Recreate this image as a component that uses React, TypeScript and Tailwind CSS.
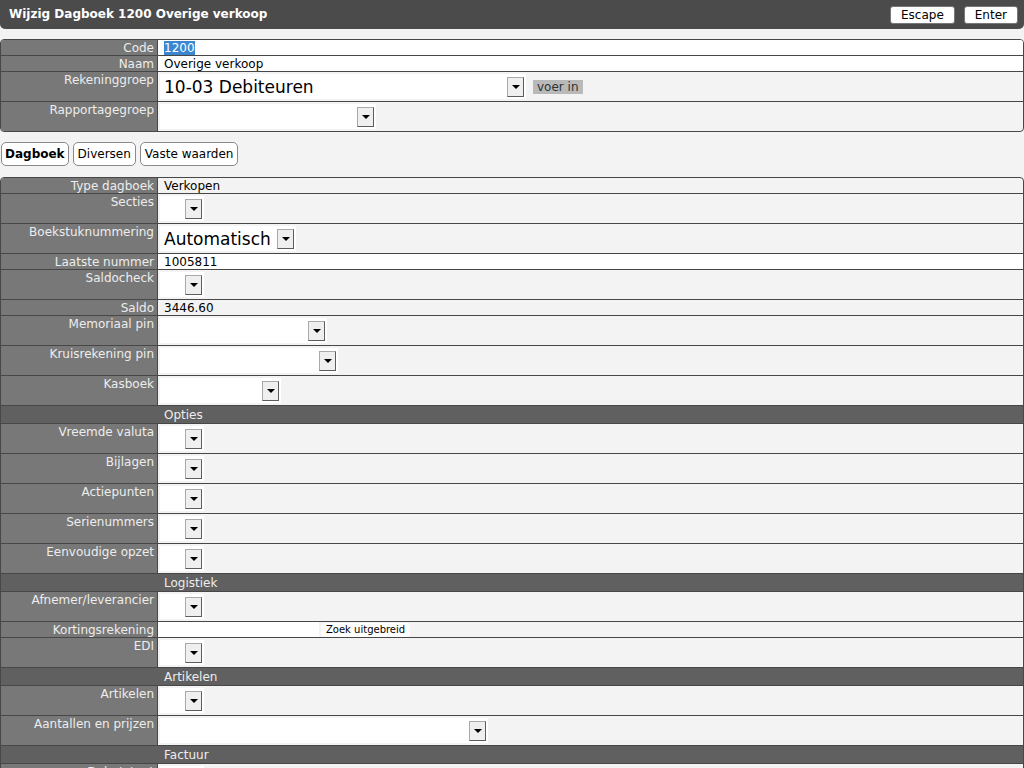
import React from 'react'

type Row =
  | { kind: 'text'; label: string; value?: React.ReactNode; white?: boolean }
  | { kind: 'select'; label: string; w: string; text?: string }
  | { kind: 'section'; title: string }
  | { kind: 'search'; label: string }

const dagboekRows: Row[] = [
  { kind: 'text', label: 'Type dagboek', value: 'Verkopen' },
  { kind: 'select', label: 'Secties', w: 'w-[44px]' },
  { kind: 'select', label: 'Boekstuknummering', w: 'w-[136px]', text: 'Automatisch' },
  { kind: 'text', label: 'Laatste nummer', value: '1005811', white: true },
  { kind: 'select', label: 'Saldocheck', w: 'w-[44px]' },
  { kind: 'text', label: 'Saldo', value: '3446.60' },
  { kind: 'select', label: 'Memoriaal pin', w: 'w-[167px]' },
  { kind: 'select', label: 'Kruisrekening pin', w: 'w-[178px]' },
  { kind: 'select', label: 'Kasboek', w: 'w-[121px]' },
  { kind: 'section', title: 'Opties' },
  { kind: 'select', label: 'Vreemde valuta', w: 'w-[44px]' },
  { kind: 'select', label: 'Bijlagen', w: 'w-[44px]' },
  { kind: 'select', label: 'Actiepunten', w: 'w-[44px]' },
  { kind: 'select', label: 'Serienummers', w: 'w-[44px]' },
  { kind: 'select', label: 'Eenvoudige opzet', w: 'w-[44px]' },
  { kind: 'section', title: 'Logistiek' },
  { kind: 'select', label: 'Afnemer/leverancier', w: 'w-[44px]' },
  { kind: 'search', label: 'Kortingsrekening' },
  { kind: 'select', label: 'EDI', w: 'w-[44px]' },
  { kind: 'section', title: 'Artikelen' },
  { kind: 'select', label: 'Artikelen', w: 'w-[44px]' },
  { kind: 'select', label: 'Aantallen en prijzen', w: 'w-[328px]' },
  { kind: 'section', title: 'Factuur' },
  { kind: 'select', label: 'Debetstaat', w: 'w-[44px]' },
  { kind: 'select', label: 'Factuurlayout', w: 'w-[200px]' },
]

function Arrow() {
  return (
    <span className="flex h-[20px] w-[17px] shrink-0 items-center justify-center border border-[#a9a9a9] border-r-[#5c5c5c] border-b-[#5c5c5c] bg-[#efefef]">
      <span className="h-0 w-0 border-x-[4px] border-t-[4px] border-x-transparent border-t-black" />
    </span>
  )
}

function Select({ w, text }: { w: string; text?: string }) {
  return (
    <div className={`ml-[2px] mt-[2px] flex h-[25px] items-center bg-white pr-[2px] ${w}`}>
      <span className="flex-1 truncate pl-[4px] text-[17px] leading-[20px] text-black">{text}</span>
      <Arrow />
    </div>
  )
}

function Label({ children }: { children: React.ReactNode }) {
  return (
    <div className="w-[157px] shrink-0 border-r border-[#474747] bg-[#787878] pr-[3px] pt-[1px] text-right text-[#ededed]">
      {children}
    </div>
  )
}

function FormRow({ row, last }: { row: Row; last: boolean }) {
  const border = last ? '' : 'border-b border-[#474747]'
  if (row.kind === 'section') {
    return (
      <div className={`h-[18px] bg-[#606060] pl-[163px] pt-[1px] leading-[17px] text-[#ededed] ${border}`}>{row.title}</div>
    )
  }
  if (row.kind === 'select') {
    return (
      <div className={`flex h-[30px] ${border}`}>
        <Label>{row.label}</Label>
        <div className="flex flex-1 items-start">
          <Select w={row.w} text={row.text} />
        </div>
      </div>
    )
  }
  if (row.kind === 'search') {
    return (
      <div className={`flex h-[16px] ${border}`}>
        <Label>{row.label}</Label>
        <div className="flex flex-1 items-center">
          <div className="h-[15px] w-[161px] bg-white" />
          <button className="ml-[2px] h-[14px] rounded-[4px] bg-white px-[5px] text-[10px] leading-[14px] text-black">
            Zoek uitgebreid
          </button>
        </div>
      </div>
    )
  }
  return (
    <div className={`flex h-[16px] ${border}`}>
      <Label>{row.label}</Label>
      <div className={`flex-1 pl-[6px] pt-[1px] text-black ${row.white ? 'bg-white' : ''}`}>{row.value}</div>
    </div>
  )
}

function App() {
  return (
    <div className="h-screen overflow-hidden bg-[#f3f3f3] font-['DejaVu_Sans',sans-serif] text-[12px] leading-[15px]">
      <header className="flex h-[29px] items-center justify-between rounded-b-[5px] bg-[#4b4b4b] pl-[9px] pr-[6px]">
        <h1 className="text-[12px] font-bold text-white">Wijzig Dagboek 1200 Overige verkoop</h1>
        <div className="flex gap-[9px]">
          <button className="h-[18px] rounded-[3px] border border-[#777] bg-white px-[10px] leading-[16px] text-black">Escape</button>
          <button className="h-[18px] rounded-[3px] border border-[#777] bg-white px-[10px] leading-[16px] text-black">Enter</button>
        </div>
      </header>

      <div className="mt-[10px] overflow-hidden rounded-[4px] border border-[#474747]">
        <div className="flex h-[16px] border-b border-[#474747]">
          <Label>Code</Label>
          <div className="flex-1 bg-white pl-[6px] pt-[1px]">
            <span className="bg-[#3b86d1] text-white">1200</span>
          </div>
        </div>
        <div className="flex h-[16px] border-b border-[#474747]">
          <Label>Naam</Label>
          <div className="flex-1 bg-white pl-[6px] pt-[1px] text-black">Overige verkoop</div>
        </div>
        <div className="flex h-[30px] border-b border-[#474747]">
          <Label>Rekeninggroep</Label>
          <div className="flex flex-1 items-start">
            <Select w="w-[366px]" text="10-03 Debiteuren" />
            <button className="ml-[7px] mt-[8px] h-[14px] bg-[#b9b9b9] px-[4px] text-[12px] leading-[14px] text-[#333]">voer in</button>
          </div>
        </div>
        <div className="flex h-[29px]">
          <Label>Rapportagegroep</Label>
          <div className="flex flex-1 items-start">
            <Select w="w-[216px]" />
          </div>
        </div>
      </div>

      <div className="mt-[10px] flex gap-[4px] pl-[1px]">
        <button className="h-[24px] rounded-[5px] border border-[#8a8a8a] bg-white px-[3px] font-bold text-black">Dagboek</button>
        <button className="h-[24px] rounded-[5px] border border-[#8a8a8a] bg-white px-[4px] text-black">Diversen</button>
        <button className="h-[24px] rounded-[5px] border border-[#8a8a8a] bg-white px-[4px] text-black">Vaste waarden</button>
      </div>

      <div className="mt-[11px] overflow-hidden rounded-[4px] border border-[#474747]">
        {dagboekRows.map((row, i) => (
          <FormRow key={i} row={row} last={i === dagboekRows.length - 1} />
        ))}
      </div>
    </div>
  )
}

export default App
